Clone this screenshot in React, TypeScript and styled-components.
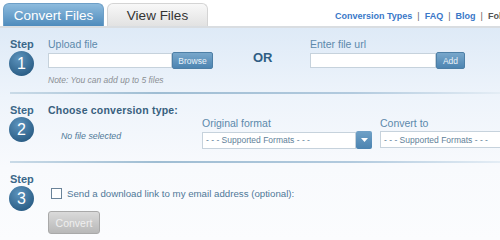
import { createGlobalStyle } from "styled-components";
import styled from "styled-components";

const GlobalStyle = createGlobalStyle`
  html, body { margin: 0; padding: 0; overflow: hidden; background: #ffffff; }
  body { font-family: "Liberation Sans", Arial, sans-serif; }
`;

const Page = styled.div`
  width: 500px;
  height: 240px;
  overflow: hidden;
  background: #ffffff;
`;

const Header = styled.div`
  display: flex;
  align-items: flex-end;
  height: 26px;
  padding-left: 3px;
  white-space: nowrap;
  border-bottom: 2px solid #d9dde1;
`;

const Tab = styled.div<{ $active?: boolean }>`
  width: 101px;
  height: 23px;
  flex-shrink: 0;
  margin-right: 3px;
  border-radius: 6px 6px 0 0;
  display: flex;
  align-items: center;
  justify-content: center;
  font-size: 13.5px;
  color: ${(p) => (p.$active ? "#ffffff" : "#333333")};
  background: ${(p) =>
    p.$active
      ? "linear-gradient(#8dbbdd, #4e8bbc)"
      : "linear-gradient(#f8f8f8, #e2e2e2)"};
  border: 1px solid ${(p) => (p.$active ? "#6d9fc7" : "#d4d4d4")};
  border-bottom: none;
  box-sizing: border-box;
`;

const Links = styled.div`
  margin-left: 124px;
  padding-bottom: 5px;
  font-size: 9px;
  font-weight: bold;
  color: #3a78c8;
  display: flex;
  gap: 5px;
  flex-shrink: 0;
`;

const Sep = styled.span`
  color: #666666;
  font-weight: normal;
`;

const Follow = styled.span`
  color: #555555;
`;

const Content = styled.div`
  background: linear-gradient(#deeaf7 0px, #eef4fb 70px, #f8fafd 140px, #fbfcfe 212px);
  height: 212px;
`;

const Section = styled.div<{ $h: number }>`
  height: ${(p) => p.$h}px;
  display: flex;
  padding: 10px 0 0 10px;
  box-sizing: border-box;
`;

const Divider = styled.div`
  height: 2px;
  margin-left: 10px;
  background: linear-gradient(90deg, #c9dae7, #9fbdd3 30%, #b2cade 70%, #e4edf5);
`;

const StepCol = styled.div`
  width: 38px;
  display: flex;
  flex-direction: column;
  align-items: flex-start;
  flex-shrink: 0;
`;

const StepLabel = styled.div`
  font-size: 11px;
  line-height: 13px;
  font-weight: bold;
  color: #3b6789;
`;

const Circle = styled.div`
  width: 25px;
  height: 25px;
  border-radius: 50%;
  margin-left: -1px;
  background: radial-gradient(circle at 40% 30%, #5c93bd, #2c5f87 75%);
  color: #ffffff;
  font-size: 16px;
  display: flex;
  align-items: center;
  justify-content: center;
`;

const Field = styled.div<{ $w: number }>`
  width: ${(p) => p.$w}px;
  flex-shrink: 0;
`;

const Label = styled.div`
  font-size: 10.5px;
  line-height: 13px;
  color: #5c89ab;
`;

const InputRow = styled.div`
  display: flex;
  align-items: center;
  margin-top: 1px;
`;

const Input = styled.div<{ $w: number }>`
  width: ${(p) => p.$w}px;
  height: 15px;
  background: #ffffff;
  border: 1px solid #c6d2dc;
  box-sizing: border-box;
`;

const BlueButton = styled.div<{ $w: number }>`
  width: ${(p) => p.$w}px;
  height: 17px;
  border-radius: 2px;
  background: linear-gradient(#78a7cb, #4c84b1);
  border: 1px solid #4d7fa6;
  color: #e9f2f9;
  font-size: 8.5px;
  display: flex;
  align-items: center;
  justify-content: center;
  box-sizing: border-box;
`;

const Note = styled.div`
  font-size: 8.5px;
  font-style: italic;
  color: #8a8f94;
  margin-top: 6px;
`;

const Or = styled.div`
  width: 57px;
  font-size: 13px;
  font-weight: bold;
  color: #2f5e84;
  padding-top: 12px;
  margin-left: 40px;
`;

const Heading = styled.div`
  font-size: 10.5px;
  line-height: 13px;
  font-weight: bold;
  color: #38607e;
  letter-spacing: 0.2px;
`;

const Italic = styled.div`
  font-size: 8.8px;
  font-style: italic;
  color: #4f7898;
  margin: 14px 0 0 13px;
`;

const Select = styled.div<{ $w: number }>`
  width: ${(p) => p.$w}px;
  height: 17px;
  background: #ffffff;
  border: 1px solid #c6d2dc;
  box-sizing: border-box;
  display: flex;
  align-items: center;
  font-size: 8.5px;
  color: #5f7f99;
  padding-left: 3px;
  white-space: nowrap;
  overflow: hidden;
  flex-shrink: 0;
`;

const Arrow = styled.div`
  width: 16px;
  height: 18px;
  background: linear-gradient(#70a1c7, #4b83b0);
  border-radius: 2px;
  display: flex;
  align-items: center;
  justify-content: center;
  flex-shrink: 0;
`;

const FieldsRow = styled.div`
  display: flex;
  align-items: flex-start;
`;

const CheckRow = styled.div`
  display: flex;
  align-items: center;
  gap: 5px;
  margin-top: 15px;
  margin-left: 3px;
  font-size: 9.7px;
  color: #4f7898;
`;

const Box = styled.div`
  width: 9px;
  height: 9px;
  border: 1px solid #6a8399;
  background: #ffffff;
`;

const GreyButton = styled.div`
  width: 52px;
  height: 23px;
  margin-top: 12px;
  border-radius: 3px;
  background: linear-gradient(#dadada, #b8b8b8);
  border: 1px solid #a9a9a9;
  box-sizing: border-box;
  color: #efefef;
  font-size: 10.5px;
  display: flex;
  align-items: center;
  justify-content: center;
`;

const Column = styled.div`
  display: flex;
  flex-direction: column;
`;

const Step = ({ n }: { n: number }) => (
  <StepCol>
    <StepLabel>Step</StepLabel>
    <Circle>{n}</Circle>
  </StepCol>
);

const FormatSelect = ({ w }: { w: number }) => (
  <Select $w={w}>- - - Supported Formats - - -</Select>
);

export default function App() {
  return (
    <Page>
      <GlobalStyle />
      <Header>
        <Tab $active>Convert Files</Tab>
        <Tab>View Files</Tab>
        <Links>
          <span>Conversion Types</span>
          <Sep>|</Sep>
          <span>FAQ</span>
          <Sep>|</Sep>
          <span>Blog</span>
          <Sep>|</Sep>
          <Follow>Follow</Follow>
        </Links>
      </Header>
      <Content>
        <Section $h={64}>
          <Step n={1} />
          <Field $w={165}>
            <Label>Upload file</Label>
            <InputRow>
              <Input $w={124} />
              <BlueButton $w={41}>Browse</BlueButton>
            </InputRow>
            <Note>Note: You can add up to 5 files</Note>
          </Field>
          <Or>OR</Or>
          <Field $w={160}>
            <Label>Enter file url</Label>
            <InputRow>
              <Input $w={126} />
              <BlueButton $w={29}>Add</BlueButton>
            </InputRow>
          </Field>
        </Section>
        <Divider />
        <Section $h={67}>
          <Step n={2} />
          <Column>
            <Heading>Choose conversion type:</Heading>
            <FieldsRow>
              <Field $w={154}>
                <Italic>No file selected</Italic>
              </Field>
              <Field $w={178}>
                <Label>Original format</Label>
                <InputRow>
                  <FormatSelect w={154} />
                  <Arrow>
                    <svg width="7" height="4" viewBox="0 0 7 4">
                      <path d="M0 0 L7 0 L3.5 4 Z" fill="#ffffff" />
                    </svg>
                  </Arrow>
                </InputRow>
              </Field>
              <Field $w={140}>
                <Label>Convert to</Label>
                <InputRow>
                  <FormatSelect w={140} />
                </InputRow>
              </Field>
            </FieldsRow>
          </Column>
        </Section>
        <Divider />
        <Section $h={79}>
          <Step n={3} />
          <Column>
            <CheckRow>
              <Box />
              Send a download link to my email address (optional):
            </CheckRow>
            <GreyButton>Convert</GreyButton>
          </Column>
        </Section>
      </Content>
    </Page>
  );
}
